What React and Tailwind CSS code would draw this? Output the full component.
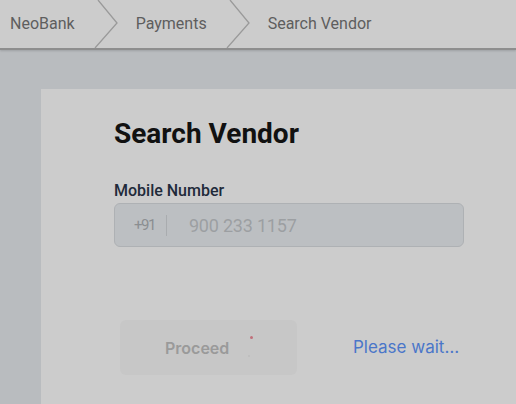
import React from "react";

function Chevron() {
  return (
    <svg width="24" height="48" viewBox="0 0 24 48" className="shrink-0">
      <polyline points="4,0 23,23 1,48" fill="none" stroke="#9a9a9a" strokeWidth="1.3" />
    </svg>
  );
}

export default function App() {
  return (
    <div className="w-[516px] h-[404px] overflow-hidden bg-[#b9bcbf] flex flex-col" style={{ fontFamily: "Roboto, 'Liberation Sans', sans-serif" }}>
      <div className="h-[50px] shrink-0 bg-[#cccccc] border-b-2 border-[#8e8e8e] shadow-[0_1px_2px_rgba(0,0,0,0.15)] flex items-center text-[16px] text-[#5e5e5e]">
        <span className="pl-[10px] pr-[19px]">NeoBank</span>
        <Chevron />
        <span className="pl-[18px] pr-[19px]">Payments</span>
        <Chevron />
        <span className="pl-[18px]">Search Vendor</span>
      </div>
      <div className="flex-1 pl-[41px] pt-[39px]">
        <div className="w-[520px] h-full bg-[#cccccc] pl-[73px] pt-[28px]">
          <h1 className="text-[28px] leading-[34px] font-bold text-[#111111]">Search Vendor</h1>
          <div className="mt-[30px] text-[16px] leading-[19px] font-medium text-[#1f2a3a]">Mobile Number</div>
          <div className="mt-[3px] w-[350px] h-[44px] rounded-[6px] border border-[#aeb1b4] bg-[#bcbfc2] flex items-center">
            <span className="pl-[19px] text-[15px] tracking-[-1.5px] text-[#8b8e91]">+91</span>
            <span className="ml-[11px] w-px h-[21px] bg-[#a9acaf]" />
            <span className="ml-[22px] text-[18px] tracking-[-0.2px] text-[#9c9fa2]">900 233 1157</span>
          </div>
          <div className="mt-[73px] flex items-center">
            <div className="ml-[6px] w-[177px] h-[55px] rounded-[6px] bg-[#c7c7c7] relative flex items-center pl-[45px]">
              <span className="text-[16px] font-semibold text-[#9a9a9a]" style={{ fontFamily: "Inter, sans-serif" }}>Proceed</span>
              <span className="absolute left-[130px] top-[16px] w-[3px] h-[3px] rounded-full bg-[#c0707a]" />
              <span className="absolute left-[128px] top-[35px] w-[2px] h-[2px] rounded-full bg-[#bdbdbd]" />
            </div>
            <span className="ml-[56px] text-[17px] text-[#4a76c9]" style={{ fontFamily: "Inter, sans-serif" }}>Please wait…</span>
          </div>
        </div>
      </div>
    </div>
  );
}
